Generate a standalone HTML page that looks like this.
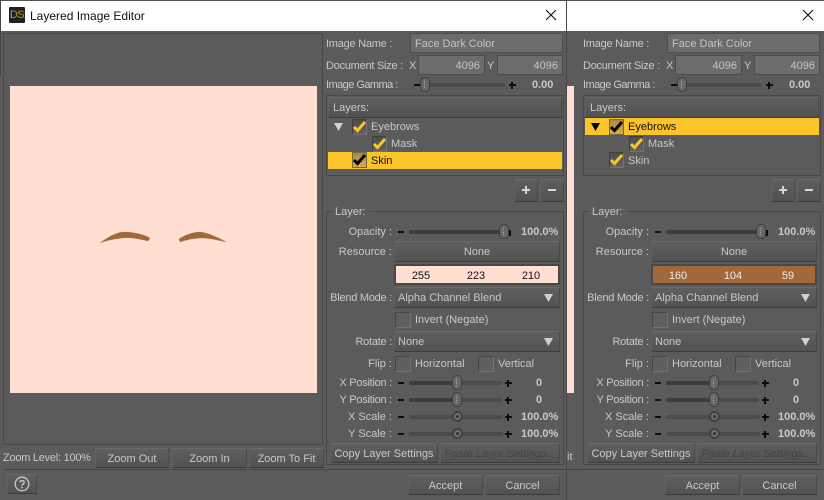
<!DOCTYPE html>
<html><head><meta charset="utf-8"><style>
html,body{margin:0;padding:0;background:#5b5b5b}
#root{position:relative;width:824px;height:500px;overflow:hidden;background:#5b5b5b;font:11px "Liberation Sans",sans-serif;color:#c9c9c9}
#root div,#root svg{position:absolute}
.t{white-space:nowrap;line-height:14px;height:14px;margin-top:1px}
.r{text-align:right}
.c{text-align:center}
.b{font-weight:bold}
.a{letter-spacing:-.25px}
.g{letter-spacing:-.55px}
.btn{box-sizing:border-box;padding-top:1px;border:1px solid #484848;border-top-color:#6a6a6a;border-left-color:#606060;border-right-color:#4a4a4a;border-bottom-color:#3c3c3c;background:linear-gradient(#5f5f5f,#525252);text-align:center;white-space:nowrap}
.inp{box-sizing:border-box;padding-top:1px;border:1px solid #4d4d4d;background:#6c6c6c;line-height:18px;white-space:nowrap;color:#c4c4c4}
.cb{box-sizing:border-box;width:15px;height:16px;border:1px solid #3f3f3f;border-right-color:#747474;border-bottom-color:#747474;background:linear-gradient(#4c4c4c,#626262)}
.cbe{box-sizing:border-box;width:16px;height:16px;border:1px solid #444;border-right-color:#727272;border-bottom-color:#727272;background:#5f5f5f}
.tr{height:4px;border-radius:2px;background:#4b4b4b}
.trd{height:4px;border-radius:2px;background:#3c3c3c}
.kn{box-sizing:border-box;width:10px;height:15px;border-radius:5px;border:1px solid #3d3d3d;background:#676767}
.kn i{position:absolute;left:3px;top:3px;width:2px;height:7px;border-left:1px dotted #aaa}
.kr{box-sizing:border-box;width:11px;height:11px;border-radius:50%;border:2px solid #414141;background:#6f6f6f}
.kr i{position:absolute;left:2px;top:2px;width:3px;height:3px;border-radius:50%;background:#333}
.mn{width:6px;height:2px;background:#0d0d0d}
.ph{width:7px;height:2px;background:#0d0d0d}
.pv{width:2px;height:7px;background:#0d0d0d}
.ln{background:#454545}
</style></head><body><div id="root">

<!-- title bars -->
<div style="left:0;top:0;width:824px;height:1px;background:#555"></div>
<div style="left:1px;top:1px;width:565px;height:30px;background:#fff"></div>
<div style="left:567px;top:1px;width:257px;height:30px;background:#fff"></div>
<div style="left:566px;top:0;width:1px;height:500px;background:#474747"></div>
<div style="left:0;top:0;width:1px;height:75px;background:#444"></div>
<div style="left:9px;top:7px;width:16px;height:16px;background:#1d2226;border-radius:1px;color:#b8962e;font-size:11px;line-height:16px;text-align:center;letter-spacing:-.5px">DS</div>
<div class="t" style="left:30px;top:8px;color:#111;font-size:12px">Layered Image Editor</div>
<svg style="left:545px;top:9px" width="12" height="12"><path d="M1 1L11 11M11 1L1 11" stroke="#111" stroke-width="1.1"/></svg>
<svg style="left:802px;top:9px" width="12" height="12"><path d="M1 1L11 11M11 1L1 11" stroke="#111" stroke-width="1.1"/></svg>

<!-- second window peek -->
<div style="left:567px;top:86px;width:7px;height:307px;background:#ffdfd2"></div>
<div class="t" style="left:567px;top:449px">it</div>

<!-- image view -->
<div style="left:3px;top:33px;width:320px;height:412px;box-sizing:border-box;border:1px solid #484848"></div>
<div style="left:10px;top:86px;width:307px;height:307px;background:#ffdfd2"></div>
<svg style="left:95px;top:228px" width="135" height="20"><path d="M5 15C12 10 19 5 28 4C38 4 48 6 55 10L53 13C44 11 36 9 28 10C20 11 12 12 5 15Z" fill="#a0683b" stroke="#a0683b" stroke-width=".5" stroke-opacity=".5"/><path d="M84 11C90 7 98 4 105 4C114 5 124 10 131 14C122 12 114 10 107 10C99 10 91 12 85 14Z" fill="#a0683b" stroke="#a0683b" stroke-width=".5" stroke-opacity=".5"/></svg>
<div class="t a" style="left:3px;top:450px">Zoom Level: 100%</div>
<div class="btn" style="left:95px;top:448px;width:74px;height:20px;line-height:18px">Zoom Out</div>
<div class="btn" style="left:172px;top:448px;width:75px;height:20px;line-height:18px">Zoom In</div>
<div class="btn" style="left:249px;top:448px;width:75px;height:20px;line-height:18px">Zoom To Fit</div>

<!-- bottom -->
<div class="ln" style="left:3px;top:469px;width:821px;height:1px"></div>
<div class="btn" style="left:7px;top:474px;width:30px;height:20px"></div>
<svg style="left:14px;top:476px" width="16" height="16"><circle cx="8" cy="8" r="6.8" fill="none" stroke="#c9c9c9" stroke-width="1.3"/><path d="M5.8 6.3C6 4.2 10.2 4.2 10.2 6.4C10.2 8 8 8 8 9.8" fill="none" stroke="#c9c9c9" stroke-width="1.4"/><rect x="7.2" y="10.8" width="1.6" height="1.6" fill="#c9c9c9"/></svg>

<!-- PANEL 1 -->
<div style="left:0;top:0;width:566px;height:500px">
<div class="t a" style="left:326px;top:36px">Image Name :</div>
<div class="inp" style="left:410px;top:33px;width:153px;height:20px;padding-left:4px">Face Dark Color</div>
<div class="t a" style="left:326px;top:58px">Document Size :</div>
<div class="t" style="left:409px;top:58px">X</div>
<div class="inp r" style="left:418px;top:55px;width:67px;height:20px;padding-right:4px">4096</div>
<div class="t" style="left:487px;top:58px">Y</div>
<div class="inp r" style="left:497px;top:55px;width:66px;height:20px;padding-right:4px">4096</div>
<div class="t g" style="left:326px;top:77px">Image Gamma :</div>
<div class="mn" style="left:414px;top:84px"></div>
<div class="tr" style="left:424px;top:83px;width:81px"></div>
<div class="kn" style="left:420px;top:77px"><i></i></div>
<div class="ph" style="left:509px;top:84px"></div><div class="pv" style="left:511px;top:82px"></div>
<div class="t b" style="left:532px;top:77px">0.00</div>

<div style="left:326px;top:95px;width:238px;height:81px;box-sizing:border-box;border:1px solid #484848"></div>
<div class="btn" style="left:328px;top:97px;width:234px;height:21px;line-height:19px;text-align:left;padding-left:4px">Layers:</div>
<svg style="left:334px;top:122px" width="10" height="10"><path d="M0 1H9L4.500 9Z" fill="#d0d0d0"/></svg>
<div class="cb" style="left:352px;top:119px"></div>
<svg style="left:352px;top:120px" width="15" height="13"><path d="M2 7L5.500 10.500L13 2" fill="none" stroke="#fbc52a" stroke-width="3"/></svg>
<div class="t" style="left:371px;top:119px">Eyebrows</div>
<div class="cb" style="left:372px;top:136px"></div>
<svg style="left:372px;top:137px" width="15" height="13"><path d="M2 7L5.500 10.500L13 2" fill="none" stroke="#fbc52a" stroke-width="3"/></svg>
<div class="t" style="left:391px;top:136px">Mask</div>
<div style="left:328px;top:152px;width:234px;height:17px;background:#fbc52a"></div>
<div class="cb" style="left:352px;top:152px;background:linear-gradient(#a58a45,#d3ae4a);border-color:#7a6a3a"></div>
<svg style="left:352px;top:153px" width="15" height="13"><path d="M2 7L5.500 10.500L13 2" fill="none" stroke="#000" stroke-width="3"/></svg>
<div class="t" style="left:371px;top:153px;color:#111">Skin</div>

<div class="btn" style="left:514px;top:179px;width:24px;height:23px"></div>
<div style="left:522px;top:189px;width:8px;height:2px;background:#d5d5d5"></div><div style="left:525px;top:186px;width:2px;height:8px;background:#d5d5d5"></div>
<div class="btn" style="left:540px;top:179px;width:24px;height:23px"></div>
<div style="left:548px;top:189px;width:8px;height:2px;background:#d5d5d5"></div>

<div style="left:326px;top:211px;width:238px;height:254px;box-sizing:border-box;border:1px solid #484848"></div>
<div class="t" style="left:332px;top:204px;background:#5b5b5b;padding:0 3px">Layer:</div>

<div class="t r" style="left:320px;top:224px;width:72px">Opacity :</div>
<div class="mn" style="left:398px;top:231px"></div>
<div class="trd" style="left:409px;top:230px;width:93px"></div>
<div class="kn" style="left:499px;top:224px"><i></i></div>
<div class="pv" style="left:509px;top:230px;height:6px"></div>
<div class="t b" style="left:521px;top:224px">100.0%</div>

<div class="t r" style="left:320px;top:244px;width:72px">Resource :</div>
<div class="btn" style="left:394px;top:241px;width:166px;height:21px;line-height:19px">None</div>
<div style="left:394px;top:264px;width:166px;height:21px;box-sizing:border-box;border:2px solid #484848;background:#ffdfd2"></div>
<div class="t c" style="left:401px;top:268px;width:40px;color:#111">255</div>
<div class="t c" style="left:456px;top:268px;width:40px;color:#111">223</div>
<div class="t c" style="left:511px;top:268px;width:40px;color:#111">210</div>

<div class="t r a" style="left:320px;top:290px;width:72px">Blend Mode :</div>
<div class="btn" style="left:394px;top:287px;width:166px;height:21px;line-height:19px;text-align:left;padding-left:3px">Alpha Channel Blend</div>
<svg style="left:544px;top:294px" width="10" height="8"><path d="M0 0H9L4.500 8Z" fill="#d0d0d0"/></svg>
<div class="cbe" style="left:395px;top:312px"></div>
<div class="t" style="left:415px;top:312px">Invert (Negate)</div>
<div class="t r a" style="left:320px;top:334px;width:72px">Rotate :</div>
<div class="btn" style="left:394px;top:331px;width:166px;height:21px;line-height:19px;text-align:left;padding-left:3px">None</div>
<svg style="left:544px;top:338px" width="10" height="8"><path d="M0 0H9L4.500 8Z" fill="#d0d0d0"/></svg>
<div class="t r" style="left:320px;top:356px;width:72px">Flip :</div>
<div class="cbe" style="left:395px;top:356px"></div>
<div class="t" style="left:415px;top:356px">Horizontal</div>
<div class="cbe" style="left:478px;top:356px"></div>
<div class="t" style="left:498px;top:356px">Vertical</div>

<div class="t r a" style="left:320px;top:375px;width:72px">X Position :</div>
<div class="mn" style="left:398px;top:382px"></div>
<div class="tr" style="left:409px;top:381px;width:93px"></div><div class="trd" style="left:409px;top:381px;width:48px"></div>
<div class="kn" style="left:452px;top:375px"><i></i></div>
<div class="ph" style="left:505px;top:382px"></div><div class="pv" style="left:507px;top:380px"></div>
<div class="t b" style="left:536px;top:375px">0</div>

<div class="t r a" style="left:320px;top:392px;width:72px">Y Position :</div>
<div class="mn" style="left:398px;top:399px"></div>
<div class="tr" style="left:409px;top:398px;width:93px"></div><div class="trd" style="left:409px;top:398px;width:48px"></div>
<div class="kn" style="left:452px;top:392px"><i></i></div>
<div class="ph" style="left:505px;top:399px"></div><div class="pv" style="left:507px;top:397px"></div>
<div class="t b" style="left:536px;top:392px">0</div>

<div class="t r" style="left:320px;top:409px;width:72px">X Scale :</div>
<div class="mn" style="left:398px;top:416px"></div>
<div class="tr" style="left:409px;top:415px;width:94px"></div>
<div class="kr" style="left:452px;top:411px"><i></i></div>
<div class="ph" style="left:505px;top:416px"></div><div class="pv" style="left:507px;top:414px"></div>
<div class="t b" style="left:521px;top:409px">100.0%</div>

<div class="t r" style="left:320px;top:426px;width:72px">Y Scale :</div>
<div class="mn" style="left:398px;top:433px"></div>
<div class="tr" style="left:409px;top:432px;width:94px"></div>
<div class="kr" style="left:452px;top:428px"><i></i></div>
<div class="ph" style="left:505px;top:433px"></div><div class="pv" style="left:507px;top:431px"></div>
<div class="t b" style="left:521px;top:426px">100.0%</div>

<div class="btn" style="left:330px;top:443px;width:108px;height:20px;line-height:18px">Copy Layer Settings</div>
<div class="btn" style="left:440px;top:443px;width:120px;height:20px;line-height:18px;color:#454545;font-style:italic">Paste Layer Settings...</div>
<div class="btn" style="left:408px;top:475px;width:75px;height:20px;line-height:18px">Accept</div>
<div class="btn" style="left:485px;top:475px;width:75px;height:20px;line-height:18px">Cancel</div>
</div>

<!-- PANEL 2 -->
<div style="left:257px;top:0;width:567px;height:500px">
<div class="t a" style="left:326px;top:36px">Image Name :</div>
<div class="inp" style="left:410px;top:33px;width:153px;height:20px;padding-left:4px">Face Dark Color</div>
<div class="t a" style="left:326px;top:58px">Document Size :</div>
<div class="t" style="left:409px;top:58px">X</div>
<div class="inp r" style="left:418px;top:55px;width:67px;height:20px;padding-right:4px">4096</div>
<div class="t" style="left:487px;top:58px">Y</div>
<div class="inp r" style="left:497px;top:55px;width:66px;height:20px;padding-right:4px">4096</div>
<div class="t g" style="left:326px;top:77px">Image Gamma :</div>
<div class="mn" style="left:414px;top:84px"></div>
<div class="tr" style="left:424px;top:83px;width:81px"></div>
<div class="kn" style="left:420px;top:77px"><i></i></div>
<div class="ph" style="left:509px;top:84px"></div><div class="pv" style="left:511px;top:82px"></div>
<div class="t b" style="left:532px;top:77px">0.00</div>

<div style="left:326px;top:95px;width:238px;height:81px;box-sizing:border-box;border:1px solid #484848"></div>
<div class="btn" style="left:328px;top:97px;width:234px;height:21px;line-height:19px;text-align:left;padding-left:4px">Layers:</div>
<div style="left:328px;top:118px;width:234px;height:17px;background:#fbc52a"></div>
<svg style="left:334px;top:122px" width="10" height="10"><path d="M0 1H9L4.500 9Z" fill="#000"/></svg>
<div class="cb" style="left:352px;top:119px;background:linear-gradient(#a58a45,#d3ae4a);border-color:#7a6a3a"></div>
<svg style="left:352px;top:120px" width="15" height="13"><path d="M2 7L5.500 10.500L13 2" fill="none" stroke="#000" stroke-width="3"/></svg>
<div class="t" style="left:371px;top:119px;color:#111">Eyebrows</div>
<div class="cb" style="left:372px;top:136px"></div>
<svg style="left:372px;top:137px" width="15" height="13"><path d="M2 7L5.500 10.500L13 2" fill="none" stroke="#fbc52a" stroke-width="3"/></svg>
<div class="t" style="left:391px;top:136px">Mask</div>
<div class="cb" style="left:352px;top:152px"></div>
<svg style="left:352px;top:153px" width="15" height="13"><path d="M2 7L5.500 10.500L13 2" fill="none" stroke="#fbc52a" stroke-width="3"/></svg>
<div class="t" style="left:371px;top:153px">Skin</div>

<div class="btn" style="left:514px;top:179px;width:24px;height:23px"></div>
<div style="left:522px;top:189px;width:8px;height:2px;background:#d5d5d5"></div><div style="left:525px;top:186px;width:2px;height:8px;background:#d5d5d5"></div>
<div class="btn" style="left:540px;top:179px;width:24px;height:23px"></div>
<div style="left:548px;top:189px;width:8px;height:2px;background:#d5d5d5"></div>

<div style="left:326px;top:211px;width:238px;height:254px;box-sizing:border-box;border:1px solid #484848"></div>
<div class="t" style="left:332px;top:204px;background:#5b5b5b;padding:0 3px">Layer:</div>

<div class="t r" style="left:320px;top:224px;width:72px">Opacity :</div>
<div class="mn" style="left:398px;top:231px"></div>
<div class="trd" style="left:409px;top:230px;width:93px"></div>
<div class="kn" style="left:499px;top:224px"><i></i></div>
<div class="pv" style="left:509px;top:230px;height:6px"></div>
<div class="t b" style="left:521px;top:224px">100.0%</div>

<div class="t r" style="left:320px;top:244px;width:72px">Resource :</div>
<div class="btn" style="left:394px;top:241px;width:166px;height:21px;line-height:19px">None</div>
<div style="left:394px;top:264px;width:166px;height:21px;box-sizing:border-box;border:2px solid #484848;background:#a0683b"></div>
<div class="t c" style="left:401px;top:268px;width:40px;color:#eee">160</div>
<div class="t c" style="left:456px;top:268px;width:40px;color:#eee">104</div>
<div class="t c" style="left:511px;top:268px;width:40px;color:#eee">59</div>

<div class="t r a" style="left:320px;top:290px;width:72px">Blend Mode :</div>
<div class="btn" style="left:394px;top:287px;width:166px;height:21px;line-height:19px;text-align:left;padding-left:3px">Alpha Channel Blend</div>
<svg style="left:544px;top:294px" width="10" height="8"><path d="M0 0H9L4.500 8Z" fill="#d0d0d0"/></svg>
<div class="cbe" style="left:395px;top:312px"></div>
<div class="t" style="left:415px;top:312px">Invert (Negate)</div>
<div class="t r a" style="left:320px;top:334px;width:72px">Rotate :</div>
<div class="btn" style="left:394px;top:331px;width:166px;height:21px;line-height:19px;text-align:left;padding-left:3px">None</div>
<svg style="left:544px;top:338px" width="10" height="8"><path d="M0 0H9L4.500 8Z" fill="#d0d0d0"/></svg>
<div class="t r" style="left:320px;top:356px;width:72px">Flip :</div>
<div class="cbe" style="left:395px;top:356px"></div>
<div class="t" style="left:415px;top:356px">Horizontal</div>
<div class="cbe" style="left:478px;top:356px"></div>
<div class="t" style="left:498px;top:356px">Vertical</div>

<div class="t r a" style="left:320px;top:375px;width:72px">X Position :</div>
<div class="mn" style="left:398px;top:382px"></div>
<div class="tr" style="left:409px;top:381px;width:93px"></div><div class="trd" style="left:409px;top:381px;width:48px"></div>
<div class="kn" style="left:452px;top:375px"><i></i></div>
<div class="ph" style="left:505px;top:382px"></div><div class="pv" style="left:507px;top:380px"></div>
<div class="t b" style="left:536px;top:375px">0</div>

<div class="t r a" style="left:320px;top:392px;width:72px">Y Position :</div>
<div class="mn" style="left:398px;top:399px"></div>
<div class="tr" style="left:409px;top:398px;width:93px"></div><div class="trd" style="left:409px;top:398px;width:48px"></div>
<div class="kn" style="left:452px;top:392px"><i></i></div>
<div class="ph" style="left:505px;top:399px"></div><div class="pv" style="left:507px;top:397px"></div>
<div class="t b" style="left:536px;top:392px">0</div>

<div class="t r" style="left:320px;top:409px;width:72px">X Scale :</div>
<div class="mn" style="left:398px;top:416px"></div>
<div class="tr" style="left:409px;top:415px;width:94px"></div>
<div class="kr" style="left:452px;top:411px"><i></i></div>
<div class="ph" style="left:505px;top:416px"></div><div class="pv" style="left:507px;top:414px"></div>
<div class="t b" style="left:521px;top:409px">100.0%</div>

<div class="t r" style="left:320px;top:426px;width:72px">Y Scale :</div>
<div class="mn" style="left:398px;top:433px"></div>
<div class="tr" style="left:409px;top:432px;width:94px"></div>
<div class="kr" style="left:452px;top:428px"><i></i></div>
<div class="ph" style="left:505px;top:433px"></div><div class="pv" style="left:507px;top:431px"></div>
<div class="t b" style="left:521px;top:426px">100.0%</div>

<div class="btn" style="left:330px;top:443px;width:108px;height:20px;line-height:18px">Copy Layer Settings</div>
<div class="btn" style="left:440px;top:443px;width:120px;height:20px;line-height:18px;color:#454545;font-style:italic">Paste Layer Settings...</div>
<div class="btn" style="left:408px;top:475px;width:75px;height:20px;line-height:18px">Accept</div>
<div class="btn" style="left:485px;top:475px;width:75px;height:20px;line-height:18px">Cancel</div>
</div>

</div></body></html>
